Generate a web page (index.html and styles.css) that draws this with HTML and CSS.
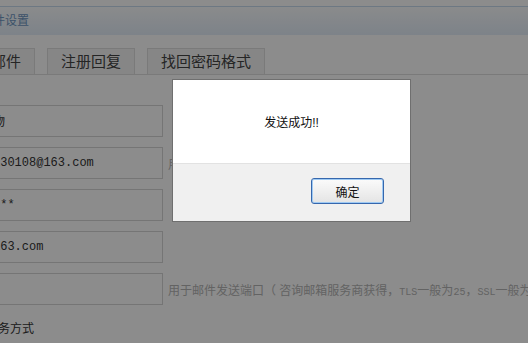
FILE: index.html
```
<!DOCTYPE html>
<html lang="zh-CN">
  <head>
    <meta charset="UTF-8" />
    <title>邮件设置</title>
    <link rel="stylesheet" href="styles.css">
  </head>
  <body>
    <div class="page">
      <div class="title-bar"><span class="title">邮件设置</span></div>

      <ul class="tabs">
        <li>邮件</li>
        <li>注册回复</li>
        <li>找回密码格式</li>
      </ul>

      <div class="form">
        <div class="row">
          <input class="field" type="text" value="商城礼物" />
        </div>
        <div class="row">
          <input class="field" type="text" value="wbn20130108@163.com" />
          <span class="hint">用于发送邮件的邮箱地址</span>
        </div>
        <div class="row">
          <input class="field" type="text" value="********" />
        </div>
        <div class="row">
          <input class="field" type="text" value="smtp.163.com" />
        </div>
        <div class="row">
          <input class="field" type="text" value="" />
          <span class="hint">用于邮件发送端口（ 咨询邮箱服务商获得，<span class="mono">TLS</span>一般为<span class="mono">25</span>，<span class="mono">SSL</span>一般为465）</span>
        </div>
        <div class="row-label">服务方式</div>
      </div>
    </div>

    <div class="mask"></div>

    <div class="dialog">
      <div class="dialog-body">发送成功!!</div>
      <div class="dialog-foot">
        <button class="btn">确定</button>
      </div>
    </div>
  </body>
</html>
```

FILE: styles.css
```
/* General */
html,
body {
  margin: 0;
  padding: 0;
  overflow: hidden;
  background: #ffffff;
}

body {
  font-family: "Liberation Sans", "Noto Sans CJK SC", sans-serif;
  font-size: 12px;
  color: #333333;
  width: 528px;
  height: 343px;
}

/* page is scrolled to the right a little */
.page {
  margin-left: -60px;
  width: 700px;
}

/* Title bar */
.title-bar {
  margin-top: 6px;
  border-top: 1px solid #c6dbef;
  height: 28px;
  line-height: 28px;
  padding-left: 41px;
  background: linear-gradient(#fbfdff, #e4eef9);
}

.title {
  color: #6f97c2;
  font-size: 12px;
}

/* Tabs */
.tabs {
  list-style: none;
  margin: 13px 0 0;
  padding: 0 0 0 37px;
  display: flex;
  gap: 12px;
  border-bottom: 1px solid #dedede;
}

.tabs li {
  height: 25px;
  line-height: 25px;
  padding: 0 13px;
  font-size: 15px;
  color: #444444;
  background: #f4f4f4;
  border: 1px solid #dedede;
  border-bottom: none;
}

/* Form */
.form {
  padding: 30px 0 0 10px;
}

.row {
  display: flex;
  align-items: center;
  height: 32px;
  margin-bottom: 10px;
}

.field {
  box-sizing: border-box;
  width: 213px;
  height: 32px;
  margin: 0;
  padding: 0 6px;
  border: 1px solid #d6d6d6;
  background: #ffffff;
  font-family: "Liberation Mono", "Noto Sans CJK SC", monospace;
  font-size: 12px;
  color: #333333;
  outline: none;
}

.hint {
  margin-left: 5px;
  color: #b4b4b4;
  white-space: nowrap;
}

.hint .mono {
  font-family: "Liberation Mono", monospace;
  font-size: 10px;
}

.row-label {
  height: 28px;
  line-height: 28px;
  padding-left: 36px;
  color: #333333;
}

/* Mask and dialog */
.mask {
  position: fixed;
  left: 0;
  top: 0;
  right: 0;
  bottom: 0;
  background: rgba(0, 0, 0, 0.45);
}

.dialog {
  position: fixed;
  left: 172px;
  top: 79px;
  width: 239px;
  height: 143px;
  box-sizing: border-box;
  border: 1px solid #6f6f6f;
  background: #ffffff;
  display: flex;
  flex-direction: column;
}

.dialog-body {
  height: 83px;
  display: flex;
  justify-content: center;
  align-items: center;
  color: #111111;
  font-size: 12px;
}

.dialog-foot {
  flex: 1;
  background: #f0f0f0;
  border-top: 1px solid #e2e2e2;
  display: flex;
  justify-content: flex-end;
  padding: 14px 26px 0 0;
}

.btn {
  width: 73px;
  height: 26px;
  border: 1px solid #3667ad;
  border-radius: 3px;
  box-shadow: inset 0 0 0 1px #9fcaf3;
  background: linear-gradient(#fbfbfb, #e4e4e4);
  font-family: "Liberation Sans", "Noto Sans CJK SC", sans-serif;
  font-size: 12px;
  color: #111111;
  padding: 0;
}
```
